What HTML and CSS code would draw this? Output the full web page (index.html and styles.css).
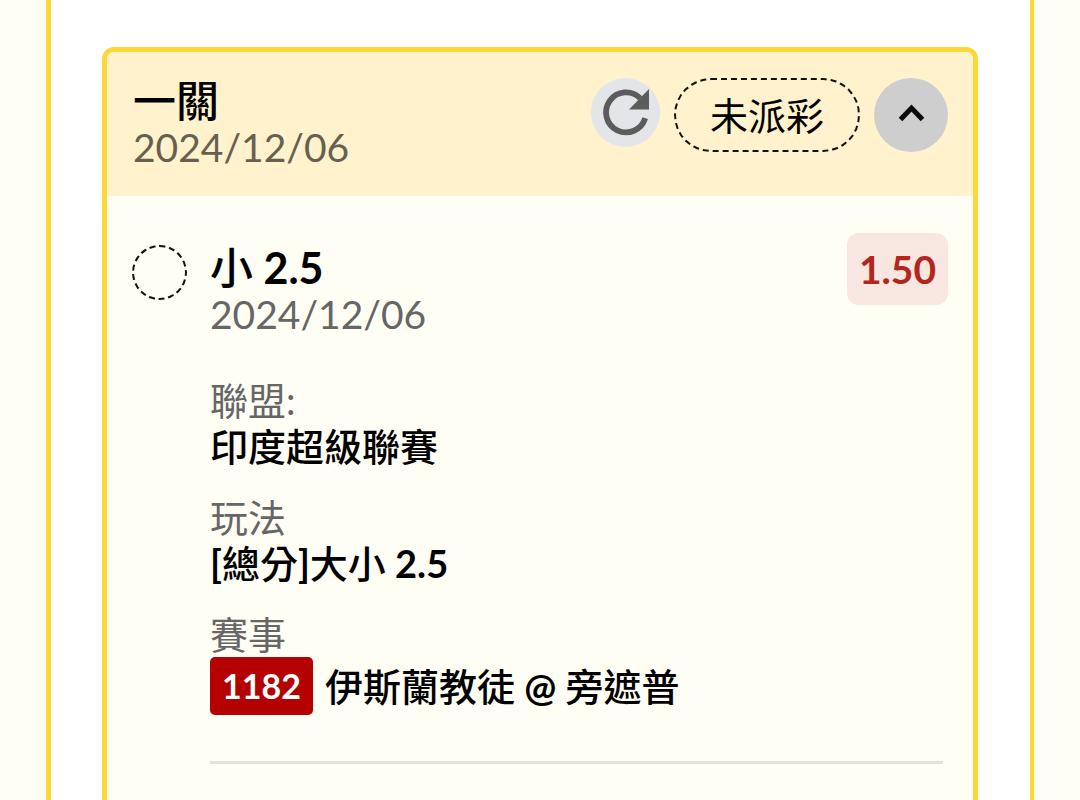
FILE: index.html
```html
<!DOCTYPE html>
<html lang="zh-Hant">
<head>
<meta charset="utf-8">
<meta name="viewport" content="width=device-width, initial-scale=1">
<title>一關 2024/12/06</title>
<link rel="stylesheet" href="styles.css">
</head>
<body>
<main class="panel">
  <article class="ticket">
    <header class="ticket-header">
      <div class="heading">
        <h1 class="title">一關</h1>
        <time class="date" datetime="2024-12-06">2024/12/06</time>
      </div>
      <div class="actions">
        <button class="refresh" type="button" aria-label="重新整理">
          <svg class="icon" viewBox="0 0 69 69" aria-hidden="true">
            <path d="M54.200 40.200A20 20 0 1 1 49.200 20.200" fill="none" stroke="#5c5c5c" stroke-width="5.800"/>
            <path d="M58 11V31.500H38Z" fill="#5c5c5c"/>
          </svg>
        </button>
        <span class="status">未派彩</span>
        <button class="toggle" type="button" aria-label="收合" aria-expanded="true">
          <svg class="icon" viewBox="0 0 74 74" aria-hidden="true">
            <path d="M26.500 41.500L37.500 30L48.500 41.500" fill="none" stroke="#0c0c0c" stroke-width="5"/>
          </svg>
        </button>
      </div>
    </header>
    <section class="bet">
      <span class="marker"></span>
      <div class="bet-main">
        <div class="pick">
          <div class="heading">
            <h2 class="title">小 2.5</h2>
            <time class="date" datetime="2024-12-06">2024/12/06</time>
          </div>
          <strong class="odds">1.50</strong>
        </div>
        <dl class="details">
          <div>
            <dt>聯盟:</dt>
            <dd>印度超級聯賽</dd>
          </div>
          <div>
            <dt>玩法</dt>
            <dd>[總分]大小 2.5</dd>
          </div>
          <div>
            <dt>賽事</dt>
            <dd class="match"><span class="code">1182</span><span>伊斯蘭教徒 @ 旁遮普</span></dd>
          </div>
        </dl>
        <hr class="divider">
      </div>
    </section>
  </article>
</main>
</body>
</html>
```
FILE: styles.css
```css
* {
  box-sizing: border-box;
}

body {
  margin: 0;
  background: #fffef5;
  color: #000;
  font-family: Lato, "Noto Sans CJK TC", sans-serif;
  font-size: 38px;
  line-height: 46px;
}

.panel {
  display: flex;
  min-height: 100vh;
  margin: 0 46px;
  padding: 47px 52px 0 51px;
  border: solid #fdd835;
  border-width: 0 4px 0 5px;
  background: #fff;
}

.ticket {
  flex: 1;
  border: 5px solid #fdd835;
  border-bottom: 0;
  border-radius: 12px 12px 0 0;
  background: #fffef5;
}

.ticket-header {
  display: flex;
  justify-content: space-between;
  align-items: flex-start;
  padding: 26px 25px 26px 26px;
  border-radius: 7px 7px 0 0;
  background: #fff2cc;
}

.heading {
  display: flex;
  flex-direction: column;
}

.title,
dd {
  margin: 0;
  font-family: Lato, "Noto Sans CJK TC Medium", "Noto Sans CJK TC", sans-serif;
  font-weight: 700;
}

.title {
  font-size: 43px;
  line-height: 46px;
}

.date {
  color: #666;
  font-size: 39px;
}

.ticket-header .date {
  color: #66614f;
}

.actions {
  display: flex;
  align-items: flex-start;
  gap: 14px;
}

button {
  padding: 0;
  border: 0;
  border-radius: 50%;
  cursor: pointer;
}

.icon {
  display: block;
  width: 100%;
}

.refresh {
  width: 69px;
  background: #e3e5e8;
}

.status {
  padding: 12px 34px;
  border: 2px dashed #111;
  border-radius: 37px;
  line-height: 46px;
}

.toggle {
  width: 74px;
  background: #cecece;
}

.bet {
  display: flex;
  gap: 23px;
  padding: 37px 25px;
}

.marker {
  flex: none;
  width: 55px;
  height: 55px;
  margin-top: 12px;
  border: 2px dashed #111;
  border-radius: 50%;
}

.bet-main {
  flex: 1;
}

.pick {
  display: flex;
  justify-content: space-between;
  align-items: flex-start;
}

.pick .heading {
  padding-top: 12px;
}

.odds {
  padding: 13px 12px;
  border-radius: 12px;
  background: #f8e7e0;
  color: #b3261e;
  font-size: 39px;
  font-weight: 700;
}

.details {
  display: flex;
  flex-direction: column;
  gap: 25px;
  margin: 40px 0 0;
}

dt {
  color: #666;
}

.match {
  display: flex;
  align-items: center;
  gap: 12px;
}

.code {
  padding: 6px 12px;
  border-radius: 5px;
  background: #b40000;
  color: #fff;
  font-size: 34px;
}

.divider {
  height: 3px;
  margin: 46px 5px 0 0;
  border: 0;
  background: #e5e2dc;
}
```
